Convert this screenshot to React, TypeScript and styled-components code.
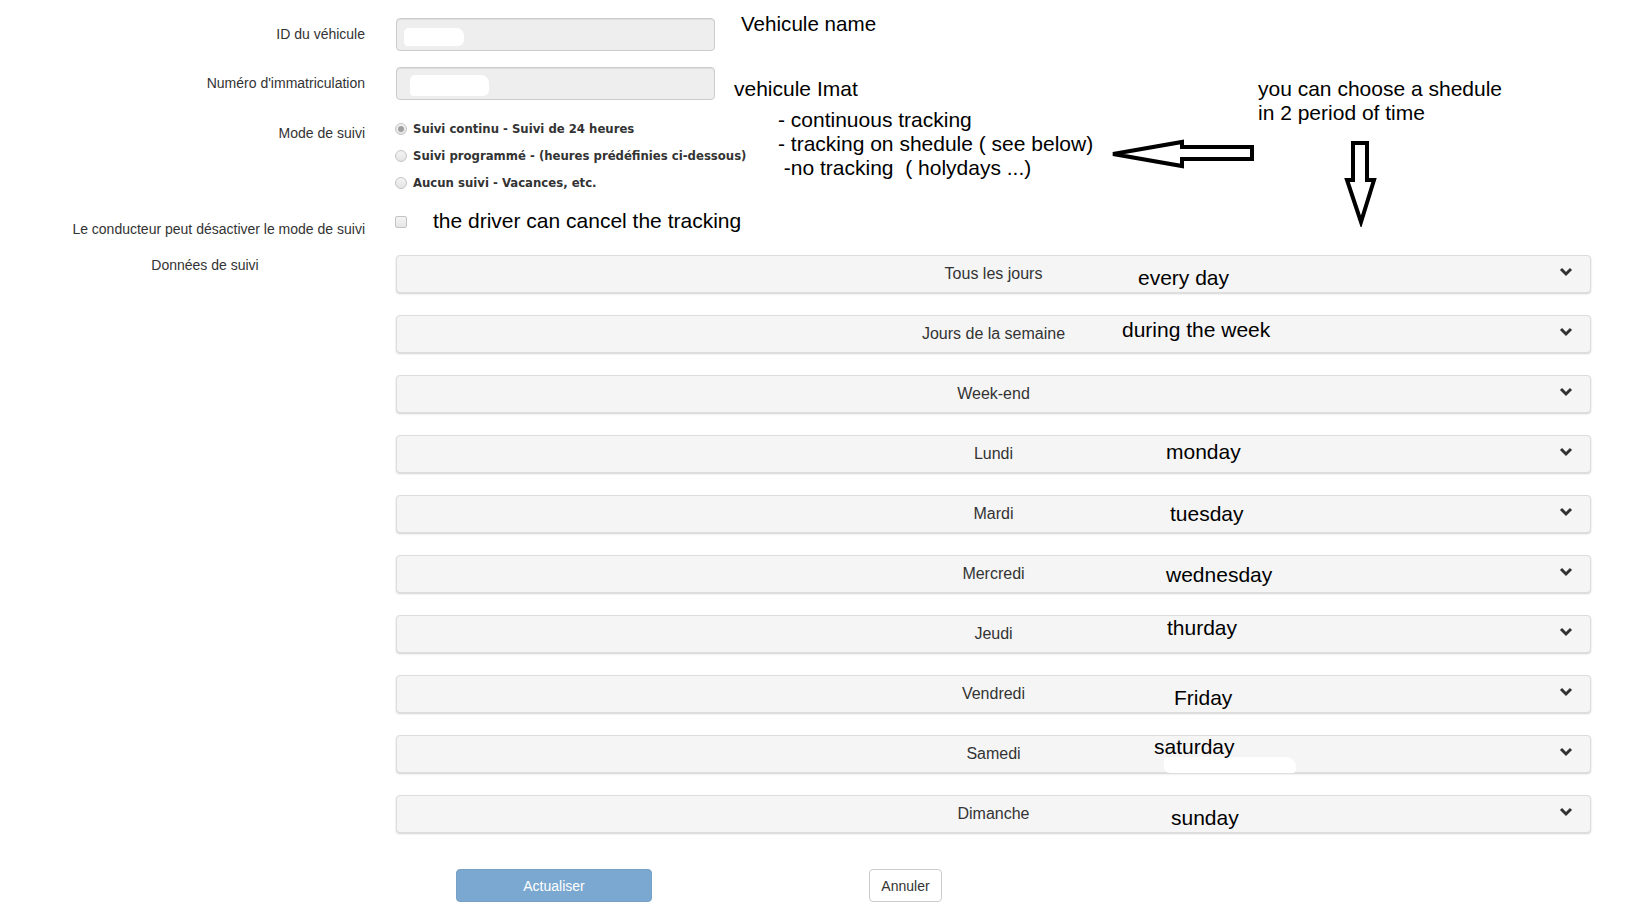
import React from "react";
import styled, { createGlobalStyle } from "styled-components";

const GlobalStyle = createGlobalStyle`
  html, body { margin: 0; padding: 0; background: #fff; }
  body { font-family: "Liberation Sans", Arial, sans-serif; color: #333; }
  * { box-sizing: border-box; }
`;

const Page = styled.div`
  position: relative;
  width: 1634px;
  height: 921px;
  padding-top: 18px;
  overflow: hidden;
`;

const Form = styled.form`
  display: flex;
  flex-direction: column;
`;

const FieldRow = styled.div<{ $gap?: number }>`
  display: grid;
  grid-template-columns: 365px 1195px;
  column-gap: 31px;
  margin-top: ${(p) => p.$gap ?? 0}px;
`;

const Label = styled.label<{ $pad?: number; $line?: number; $center?: boolean }>`
  font-size: 14px;
  color: #333;
  text-align: ${(p) => (p.$center ? "center" : "right")};
  padding-left: ${(p) => (p.$center ? 45 : 0)}px;
  padding-top: ${(p) => p.$pad ?? 0}px;
  line-height: ${(p) => p.$line ?? 20}px;
  white-space: nowrap;
`;

const Control = styled.div`
  display: flex;
  align-items: flex-start;
`;

const TextInput = styled.div`
  position: relative;
  width: 319px;
  height: 33px;
  background: #eee;
  border: 1px solid #ccc;
  border-radius: 4px;
  box-shadow: inset 0 1px 1px rgba(0, 0, 0, 0.075);
  flex-shrink: 0;
`;

const Redaction = styled.span`
  position: absolute;
  background: #fff;
  border-radius: 5px 8px 6px 4px;
`;

const Note = styled.span<{ $size?: number }>`
  font-family: "Liberation Sans", Arial, sans-serif;
  font-size: ${(p) => p.$size ?? 21}px;
  line-height: 24px;
  color: #000;
  white-space: pre;
`;

const NoteBlock = styled.div`
  display: flex;
  flex-direction: column;
`;

const RadioGroup = styled.div`
  display: flex;
  flex-direction: column;
  width: 354px;
  flex-shrink: 0;
`;

const RadioItem = styled.div`
  display: flex;
  align-items: center;
  height: 27px;
  margin-left: -1px;
`;

const RadioMark = styled.span<{ $checked?: boolean }>`
  position: relative;
  width: 12px;
  height: 12px;
  border-radius: 50%;
  border: 1px solid #c4c4c4;
  background: linear-gradient(#f4f4f4, #e4e4e4);
  margin-right: 6px;
  flex-shrink: 0;
  &::after {
    content: "";
    display: ${(p) => (p.$checked ? "block" : "none")};
    position: absolute;
    left: 2px;
    top: 2px;
    width: 6px;
    height: 6px;
    border-radius: 50%;
    background: #a0a0a0;
  }
`;

const RadioText = styled.span`
  font-family: "DejaVu Sans", Verdana, sans-serif;
  font-weight: bold;
  font-size: 11.7px;
  color: #333;
  white-space: nowrap;
`;

const CheckMark = styled.span`
  width: 12px;
  height: 12px;
  border: 1px solid #c4c4c4;
  border-radius: 2px;
  background: linear-gradient(#f4f4f4, #e6e6e6);
  margin-left: -1px;
  margin-top: 6px;
  flex-shrink: 0;
`;

const PanelList = styled.div`
  display: flex;
  flex-direction: column;
  gap: 22px;
`;

const Panel = styled.div`
  position: relative;
  height: 38px;
  background: #f5f5f5;
  border: 1px solid #ddd;
  border-radius: 4px;
  box-shadow: 0 1px 2px rgba(0, 0, 0, 0.18);
  display: flex;
  align-items: center;
  justify-content: center;
`;

const PanelTitle = styled.span`
  font-size: 16px;
  color: #333;
  line-height: 20px;
  margin-top: -1px;
`;

const Chevron = styled.svg`
  position: absolute;
  right: 17px;
  top: 11px;
`;

const DayNote = styled.span`
  position: absolute;
  font-size: 21px;
  line-height: 24px;
  color: #000;
  white-space: nowrap;
`;

const ButtonRow = styled.div`
  display: flex;
  align-items: center;
  margin-top: 36px;
  padding-left: 456px;
  gap: 217px;
`;

const PrimaryButton = styled.button`
  width: 196px;
  height: 33px;
  border-radius: 4px;
  border: 1px solid #77a0c4;
  background: #7aa8d0;
  color: #fff;
  font-family: "Liberation Sans", Arial, sans-serif;
  font-size: 14px;
  cursor: not-allowed;
`;

const DefaultButton = styled.button`
  width: 73px;
  height: 33px;
  border-radius: 4px;
  border: 1px solid #ccc;
  background: #fff;
  color: #333;
  font-family: "Liberation Sans", Arial, sans-serif;
  font-size: 14px;
`;

const Callout = styled.div<{ $x: number; $y: number }>`
  position: absolute;
  left: ${(p) => p.$x}px;
  top: ${(p) => p.$y}px;
`;

const days: { title: string; note?: string; x?: number; dy?: number; blob?: boolean }[] = [
  { title: "Tous les jours", note: "every day", x: 742, dy: 4 },
  { title: "Jours de la semaine", note: "during the week", x: 726, dy: -4 },
  { title: "Week-end" },
  { title: "Lundi", note: "monday", x: 770, dy: -2 },
  { title: "Mardi", note: "tuesday", x: 774, dy: 0 },
  { title: "Mercredi", note: "wednesday", x: 770, dy: 1 },
  { title: "Jeudi", note: "thurday", x: 771, dy: -6 },
  { title: "Vendredi", note: "Friday", x: 778, dy: 4 },
  { title: "Samedi", note: "saturday", x: 758, dy: -7, blob: true },
  { title: "Dimanche", note: "sunday", x: 775, dy: 4 },
];

const ChevronIcon = () => (
  <Chevron width="14" height="10" viewBox="0 0 14 10">
    <polyline points="2,2 7,7 12,2" fill="none" stroke="#333" strokeWidth="3" />
  </Chevron>
);

export default function App() {
  return (
    <Page>
      <GlobalStyle />
      <Form onSubmit={(e) => e.preventDefault()}>
        <FieldRow>
          <Label $line={33}>ID du véhicule</Label>
          <Control>
            <TextInput>
              <Redaction style={{ left: 7, top: 9, width: 60, height: 18 }} />
            </TextInput>
            <Note $size={20.6} style={{ marginLeft: 26, marginTop: -6 }}>
              Vehicule name
            </Note>
          </Control>
        </FieldRow>

        <FieldRow $gap={16}>
          <Label $line={33}>Numéro d'immatriculation</Label>
          <Control>
            <TextInput>
              <Redaction style={{ left: 13, top: 7, width: 79, height: 21 }} />
            </TextInput>
            <Note style={{ marginLeft: 19, marginTop: 10 }}>vehicule Imat</Note>
          </Control>
        </FieldRow>

        <FieldRow $gap={14}>
          <Label $pad={8}>Mode de suivi</Label>
          <Control>
            <RadioGroup>
              <RadioItem>
                <RadioMark $checked />
                <RadioText>Suivi continu - Suivi de 24 heures</RadioText>
              </RadioItem>
              <RadioItem>
                <RadioMark />
                <RadioText>Suivi programmé - (heures prédéfinies ci-dessous)</RadioText>
              </RadioItem>
              <RadioItem>
                <RadioMark />
                <RadioText>Aucun suivi - Vacances, etc.</RadioText>
              </RadioItem>
            </RadioGroup>
            <NoteBlock style={{ marginLeft: 28, marginTop: -7 }}>
              <Note>- continuous tracking</Note>
              <Note>- tracking on shedule ( see below)</Note>
              <Note>{" -no tracking  ( holydays ...)"}</Note>
            </NoteBlock>
          </Control>
        </FieldRow>

        <FieldRow $gap={14}>
          <Label $pad={9}>Le conducteur peut désactiver le mode de suivi</Label>
          <Control>
            <CheckMark />
            <Note style={{ marginLeft: 26, marginTop: -1 }}>the driver can cancel the tracking</Note>
          </Control>
        </FieldRow>

        <FieldRow $gap={16}>
          <Label $center>Données de suivi</Label>
          <PanelList>
            {days.map((d) => (
              <Panel key={d.title}>
                <PanelTitle>{d.title}</PanelTitle>
                {d.blob && (
                  <Redaction style={{ left: 767, top: 21, width: 132, height: 16, borderRadius: "2px 10px 4px 6px" }} />
                )}
                {d.note && (
                  <DayNote style={{ left: (d.x ?? 0) - 1, top: 6 + (d.dy ?? 0) }}>{d.note}</DayNote>
                )}
                <ChevronIcon />
              </Panel>
            ))}
          </PanelList>
        </FieldRow>

        <ButtonRow>
          <PrimaryButton type="submit" disabled>
            Actualiser
          </PrimaryButton>
          <DefaultButton type="button">Annuler</DefaultButton>
        </ButtonRow>
      </Form>

      <Callout $x={1108} $y={138}>
        <svg width="150" height="33" viewBox="0 0 150 33">
          <polygon
            points="5,16 74,4 74,9 144,9 144,21 74,21 74,28"
            fill="#fff"
            stroke="#000"
            strokeWidth="4"
            strokeLinejoin="miter"
          />
        </svg>
      </Callout>
      <Callout $x={1343} $y={139}>
        <svg width="36" height="88" viewBox="0 0 36 88">
          <polygon
            points="10,4 24,4 24,41 31,41 18,83 4,41 10,41"
            fill="#fff"
            stroke="#000"
            strokeWidth="4"
            strokeLinejoin="miter"
          />
        </svg>
      </Callout>
      <Callout $x={1258} $y={77}>
        <NoteBlock>
          <Note>you can choose a shedule</Note>
          <Note>in 2 period of time</Note>
        </NoteBlock>
      </Callout>
    </Page>
  );
}
